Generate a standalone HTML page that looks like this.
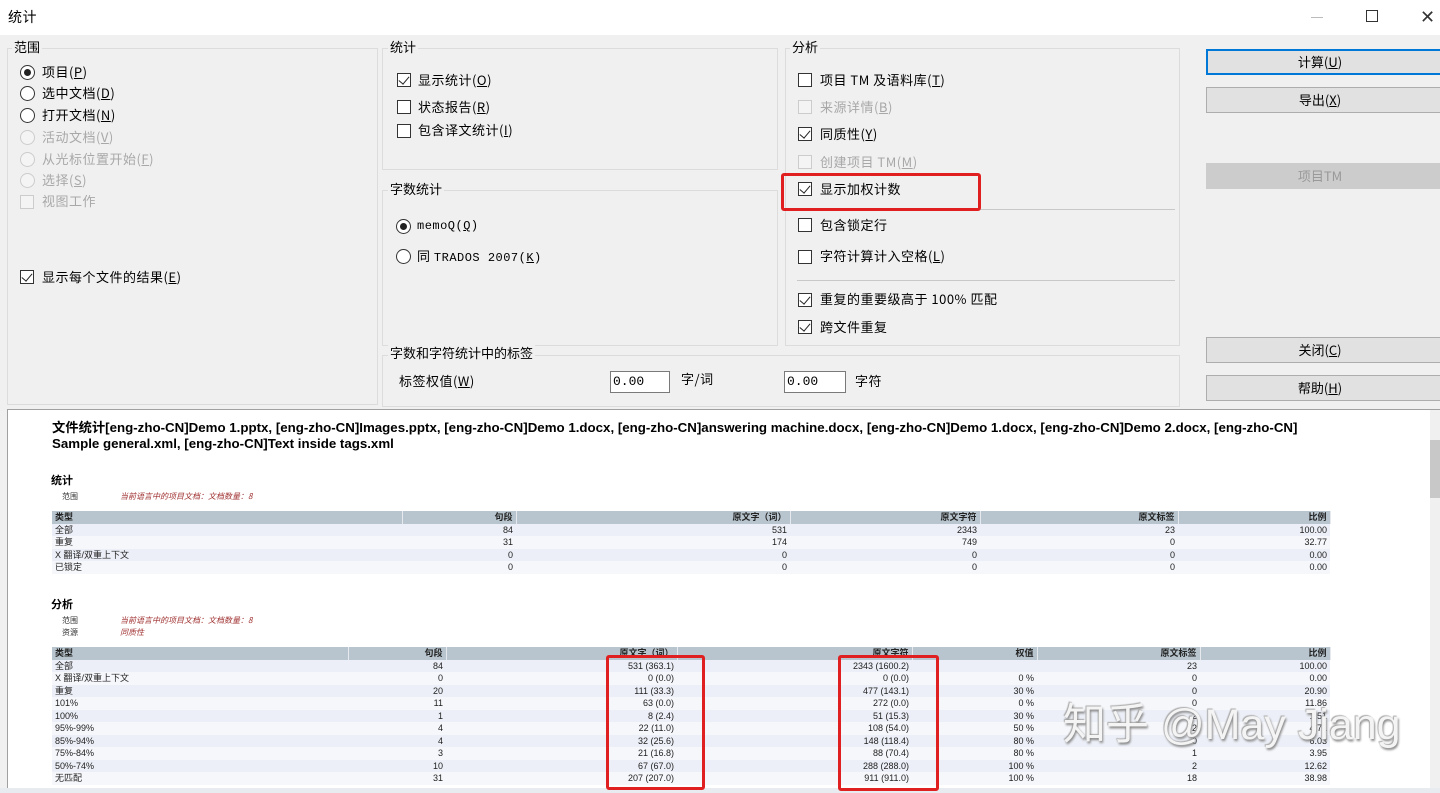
<!DOCTYPE html>
<html><head><meta charset="utf-8"><style>
*{margin:0;padding:0;box-sizing:border-box}
body{width:1440px;height:793px;position:relative;overflow:hidden;background:#f0f0f0;font-family:"Liberation Sans","Noto Sans CJK SC",sans-serif;color:#000}
.a{position:absolute;white-space:nowrap}
.t{font-family:"Noto Sans CJK SC","WenQuanYi Zen Hei",sans-serif;font-size:13px;line-height:16px;letter-spacing:0.5px}
.g{position:absolute;border:1px solid #dcdcdc}
.lbl{position:absolute;background:#f0f0f0;padding:0 2px;font-family:"Noto Sans CJK SC",sans-serif;font-size:13px;line-height:16px}
.cb{position:absolute;width:14px;height:14px;border:1px solid #333;background:#fff}
.cb.d{border-color:#ccc;background:#f4f4f4}
.cb.c::after{content:"";position:absolute;left:3px;top:0px;width:5px;height:9px;border:solid #222;border-width:0 1.5px 1.5px 0;transform:rotate(40deg)}
.rd{position:absolute;width:15px;height:15px;border:1px solid #333;border-radius:50%;background:#fff}
.rd.d{border-color:#ccc;background:#f4f4f4}
.rd.s::after{content:"";position:absolute;left:3px;top:3px;width:7px;height:7px;border-radius:50%;background:#222}
.dis{color:#a8a8a8}
.btn{position:absolute;left:1206px;width:240px;height:26px;background:#e1e1e1;border:1px solid #adadad;font-family:"Noto Sans CJK SC",sans-serif;font-size:13px;line-height:24px;text-align:center;padding-right:12px}
.inp{position:absolute;height:22px;background:#fff;border:1px solid #7a7a7a;font-family:"Liberation Mono",monospace;font-size:13px;line-height:20px;padding-left:2px}
table{position:absolute;border-collapse:collapse;font-family:"Liberation Sans","Noto Sans CJK SC",sans-serif;font-size:9px;color:#222;table-layout:fixed}
td{height:12.5px;line-height:12px;padding:0 3px;text-align:right;overflow:hidden;white-space:nowrap}
td:first-child{text-align:left}
tr.h td{background:#b8c5ce;font-weight:bold;border-right:1px solid #e6eaee}
tr:nth-child(even) td{background:#eceff7}
tr:nth-child(odd):not(.h) td{background:#f6f7fb}
.red{position:absolute;border:3px solid #e02020;border-radius:3px}
</style></head><body>
<div class="a" style="left:0;top:0;width:1440px;height:35px;background:#fff"></div>
<div class="a t" style="left:8px;top:9px;font-size:14px">统计</div>
<div class="a" style="left:1311px;top:17px;width:12px;height:1px;background:#bbb"></div>
<div class="a" style="left:1366px;top:10px;width:12px;height:12px;border:1px solid #333"></div>
<div class="a" style="left:1420px;top:7px;font-size:18px;color:#333;font-family:'DejaVu Sans'">✕</div>

<div class="g" style="left:7px;top:48px;width:371px;height:357px"></div>
<div class="lbl" style="left:12px;top:39px">范围</div>
<div class="rd s" style="left:20px;top:65px"></div><div class="a t" style="left:42px;top:64px">项目(<u>P</u>)</div>
<div class="rd" style="left:20px;top:86px"></div><div class="a t" style="left:42px;top:85px">选中文档(<u>D</u>)</div>
<div class="rd" style="left:20px;top:108px"></div><div class="a t" style="left:42px;top:107px">打开文档(<u>N</u>)</div>
<div class="rd d" style="left:20px;top:130px"></div><div class="a t dis" style="left:42px;top:129px">活动文档(<u>V</u>)</div>
<div class="rd d" style="left:20px;top:152px"></div><div class="a t dis" style="left:42px;top:151px">从光标位置开始(<u>F</u>)</div>
<div class="rd d" style="left:20px;top:173px"></div><div class="a t dis" style="left:42px;top:172px">选择(<u>S</u>)</div>
<div class="cb d" style="left:20px;top:195px"></div><div class="a t dis" style="left:42px;top:193px">视图工作</div>
<div class="cb c" style="left:20px;top:270px"></div><div class="a t" style="left:42px;top:269px">显示每个文件的结果(<u>E</u>)</div>

<div class="g" style="left:382px;top:48px;width:396px;height:122px"></div>
<div class="lbl" style="left:388px;top:39px">统计</div>
<div class="cb c" style="left:397px;top:73px"></div><div class="a t" style="left:418px;top:72px">显示统计(<u>O</u>)</div>
<div class="cb" style="left:397px;top:100px"></div><div class="a t" style="left:418px;top:99px">状态报告(<u>R</u>)</div>
<div class="cb" style="left:397px;top:124px"></div><div class="a t" style="left:418px;top:122px">包含译文统计(<u>I</u>)</div>

<div class="g" style="left:382px;top:190px;width:396px;height:156px"></div>
<div class="lbl" style="left:388px;top:181px">字数统计</div>
<div class="rd s" style="left:396px;top:219px"></div><div class="a t" style="left:417px;top:218px;font-family:'Liberation Mono',monospace;font-size:12px">memoQ(<u>Q</u>)</div>
<div class="rd" style="left:396px;top:249px"></div><div class="a t" style="left:417px;top:248px">同 <span style="font-family:'Liberation Mono',monospace;font-size:12px">TRADOS 2007(<u>K</u>)</span></div>

<div class="g" style="left:382px;top:355px;width:798px;height:52px"></div>
<div class="lbl" style="left:388px;top:345px">字数和字符统计中的标签</div>
<div class="a t" style="left:399px;top:373px">标签权值(<u>W</u>)</div>
<div class="inp" style="left:610px;top:371px;width:60px">0.00</div>
<div class="a t" style="left:681px;top:371px">字/词</div>
<div class="inp" style="left:784px;top:371px;width:62px">0.00</div>
<div class="a t" style="left:855px;top:373px">字符</div>

<div class="g" style="left:785px;top:48px;width:395px;height:298px"></div>
<div class="lbl" style="left:790px;top:39px">分析</div>
<div class="cb" style="left:798px;top:73px"></div><div class="a t" style="left:820px;top:72px">项目 TM 及语料库(<u>T</u>)</div>
<div class="cb d" style="left:798px;top:100px"></div><div class="a t dis" style="left:820px;top:99px">来源详情(<u>B</u>)</div>
<div class="cb c" style="left:798px;top:127px"></div><div class="a t" style="left:820px;top:126px">同质性(<u>Y</u>)</div>
<div class="cb d" style="left:798px;top:155px"></div><div class="a t dis" style="left:820px;top:154px">创建项目 TM(<u>M</u>)</div>
<div class="cb c" style="left:798px;top:182px"></div><div class="a t" style="left:820px;top:181px">显示加权计数</div>
<div class="a" style="left:797px;top:209px;width:378px;height:1px;background:#c8c8c8"></div>
<div class="cb" style="left:798px;top:218px"></div><div class="a t" style="left:820px;top:217px">包含锁定行</div>
<div class="cb" style="left:798px;top:250px"></div><div class="a t" style="left:820px;top:248px">字符计算计入空格(<u>L</u>)</div>
<div class="a" style="left:797px;top:280px;width:378px;height:1px;background:#c8c8c8"></div>
<div class="cb c" style="left:798px;top:293px"></div><div class="a t" style="left:820px;top:291px">重复的重要级高于 100% 匹配</div>
<div class="cb c" style="left:798px;top:320px"></div><div class="a t" style="left:820px;top:319px">跨文件重复</div>
<div class="red" style="left:781px;top:173px;width:200px;height:38px"></div>

<div class="btn" style="top:49px;border:2px solid #0078d7;line-height:22px">计算(<u>U</u>)</div>
<div class="btn" style="top:87px">导出(<u>X</u>)</div>
<div class="btn" style="top:163px;background:#cccccc;border-color:#cccccc;color:#999">项目TM</div>
<div class="btn" style="top:337px">关闭(<u>C</u>)</div>
<div class="btn" style="top:375px">帮助(<u>H</u>)</div>

<div class="a" style="left:7px;top:409px;width:1433px;height:384px;background:#fff;border-left:1px solid #a0a0a0;border-top:1px solid #a0a0a0"></div>
<div class="a" style="left:1430px;top:410px;width:10px;height:383px;background:#f0f0f0"></div>
<div class="a" style="left:1430px;top:440px;width:10px;height:58px;background:#c8c8c8"></div>
<div class="a" style="left:0;top:788px;width:1440px;height:5px;background:#e8ecf0"></div>
<div class="a" style="left:52px;top:420px;font-size:13.3px;font-weight:bold;line-height:16px">文件统计[eng-zho-CN]Demo 1.pptx, [eng-zho-CN]Images.pptx, [eng-zho-CN]Demo 1.docx, [eng-zho-CN]answering machine.docx, [eng-zho-CN]Demo 1.docx, [eng-zho-CN]Demo 2.docx, [eng-zho-CN]<br>Sample general.xml, [eng-zho-CN]Text inside tags.xml</div>
<div class="a" style="left:51px;top:472px;font-size:11px;font-weight:bold;font-family:'Noto Sans CJK SC',sans-serif">统计</div>
<div class="a" style="left:62px;top:491px;font-size:8px;color:#333;font-family:'Noto Sans CJK SC',sans-serif">范围</div>
<div class="a" style="left:120px;top:491px;font-size:8px;color:#a03030;font-style:italic;font-family:'Noto Sans CJK SC',sans-serif">当前语言中的项目文档：文档数量：8</div>
<table style="left:52px;top:511px;width:1278px">
<colgroup><col style="width:350px"><col style="width:114px"><col style="width:274px"><col style="width:190px"><col style="width:198px"><col style="width:152px"></colgroup>
<tr class="h"><td>类型</td><td>句段</td><td>原文字（词）</td><td>原文字符</td><td>原文标签</td><td>比例</td></tr>
<tr><td>全部</td><td>84</td><td>531</td><td>2343</td><td>23</td><td>100.00</td></tr>
<tr><td>重复</td><td>31</td><td>174</td><td>749</td><td>0</td><td>32.77</td></tr>
<tr><td>X 翻译/双重上下文</td><td>0</td><td>0</td><td>0</td><td>0</td><td>0.00</td></tr>
<tr><td>已锁定</td><td>0</td><td>0</td><td>0</td><td>0</td><td>0.00</td></tr>
</table>
<div class="a" style="left:51px;top:596px;font-size:11px;font-weight:bold;font-family:'Noto Sans CJK SC',sans-serif">分析</div>
<div class="a" style="left:62px;top:615px;font-size:8px;color:#333;line-height:12px;font-family:'Noto Sans CJK SC',sans-serif">范围<br>资源</div>
<div class="a" style="left:120px;top:615px;font-size:8px;color:#a03030;font-style:italic;line-height:12px;font-family:'Noto Sans CJK SC',sans-serif">当前语言中的项目文档：文档数量：8<br>同质性</div>
<table style="left:52px;top:647px;width:1278px">
<colgroup><col style="width:296px"><col style="width:98px"><col style="width:231px"><col style="width:235px"><col style="width:125px"><col style="width:163px"><col style="width:130px"></colgroup>
<tr class="h"><td>类型</td><td>句段</td><td>原文字（词）</td><td>原文字符</td><td>权值</td><td>原文标签</td><td>比例</td></tr>
<tr><td>全部</td><td>84</td><td>531 (363.1)</td><td>2343 (1600.2)</td><td></td><td>23</td><td>100.00</td></tr>
<tr><td>X 翻译/双重上下文</td><td>0</td><td>0 (0.0)</td><td>0 (0.0)</td><td>0 %</td><td>0</td><td>0.00</td></tr>
<tr><td>重复</td><td>20</td><td>111 (33.3)</td><td>477 (143.1)</td><td>30 %</td><td>0</td><td>20.90</td></tr>
<tr><td>101%</td><td>11</td><td>63 (0.0)</td><td>272 (0.0)</td><td>0 %</td><td>0</td><td>11.86</td></tr>
<tr><td>100%</td><td>1</td><td>8 (2.4)</td><td>51 (15.3)</td><td>30 %</td><td>2</td><td>1.51</td></tr>
<tr><td>95%-99%</td><td>4</td><td>22 (11.0)</td><td>108 (54.0)</td><td>50 %</td><td>2</td><td>4.71</td></tr>
<tr><td>85%-94%</td><td>4</td><td>32 (25.6)</td><td>148 (118.4)</td><td>80 %</td><td>0</td><td>6.03</td></tr>
<tr><td>75%-84%</td><td>3</td><td>21 (16.8)</td><td>88 (70.4)</td><td>80 %</td><td>1</td><td>3.95</td></tr>
<tr><td>50%-74%</td><td>10</td><td>67 (67.0)</td><td>288 (288.0)</td><td>100 %</td><td>2</td><td>12.62</td></tr>
<tr><td>无匹配</td><td>31</td><td>207 (207.0)</td><td>911 (911.0)</td><td>100 %</td><td>18</td><td>38.98</td></tr>
</table>
<div class="red" style="left:606px;top:655px;width:99px;height:135px"></div>
<div class="red" style="left:838px;top:655px;width:101px;height:136px"></div>
<div class="a" style="left:1063px;top:700px;font-size:43px;line-height:50px;color:#f4f4f4;text-shadow:1px 2px 2px #888,-1px -1px 1px #aaa;font-family:'Liberation Sans','Noto Sans CJK SC',sans-serif">知乎 @May Jiang</div>
</body></html>
